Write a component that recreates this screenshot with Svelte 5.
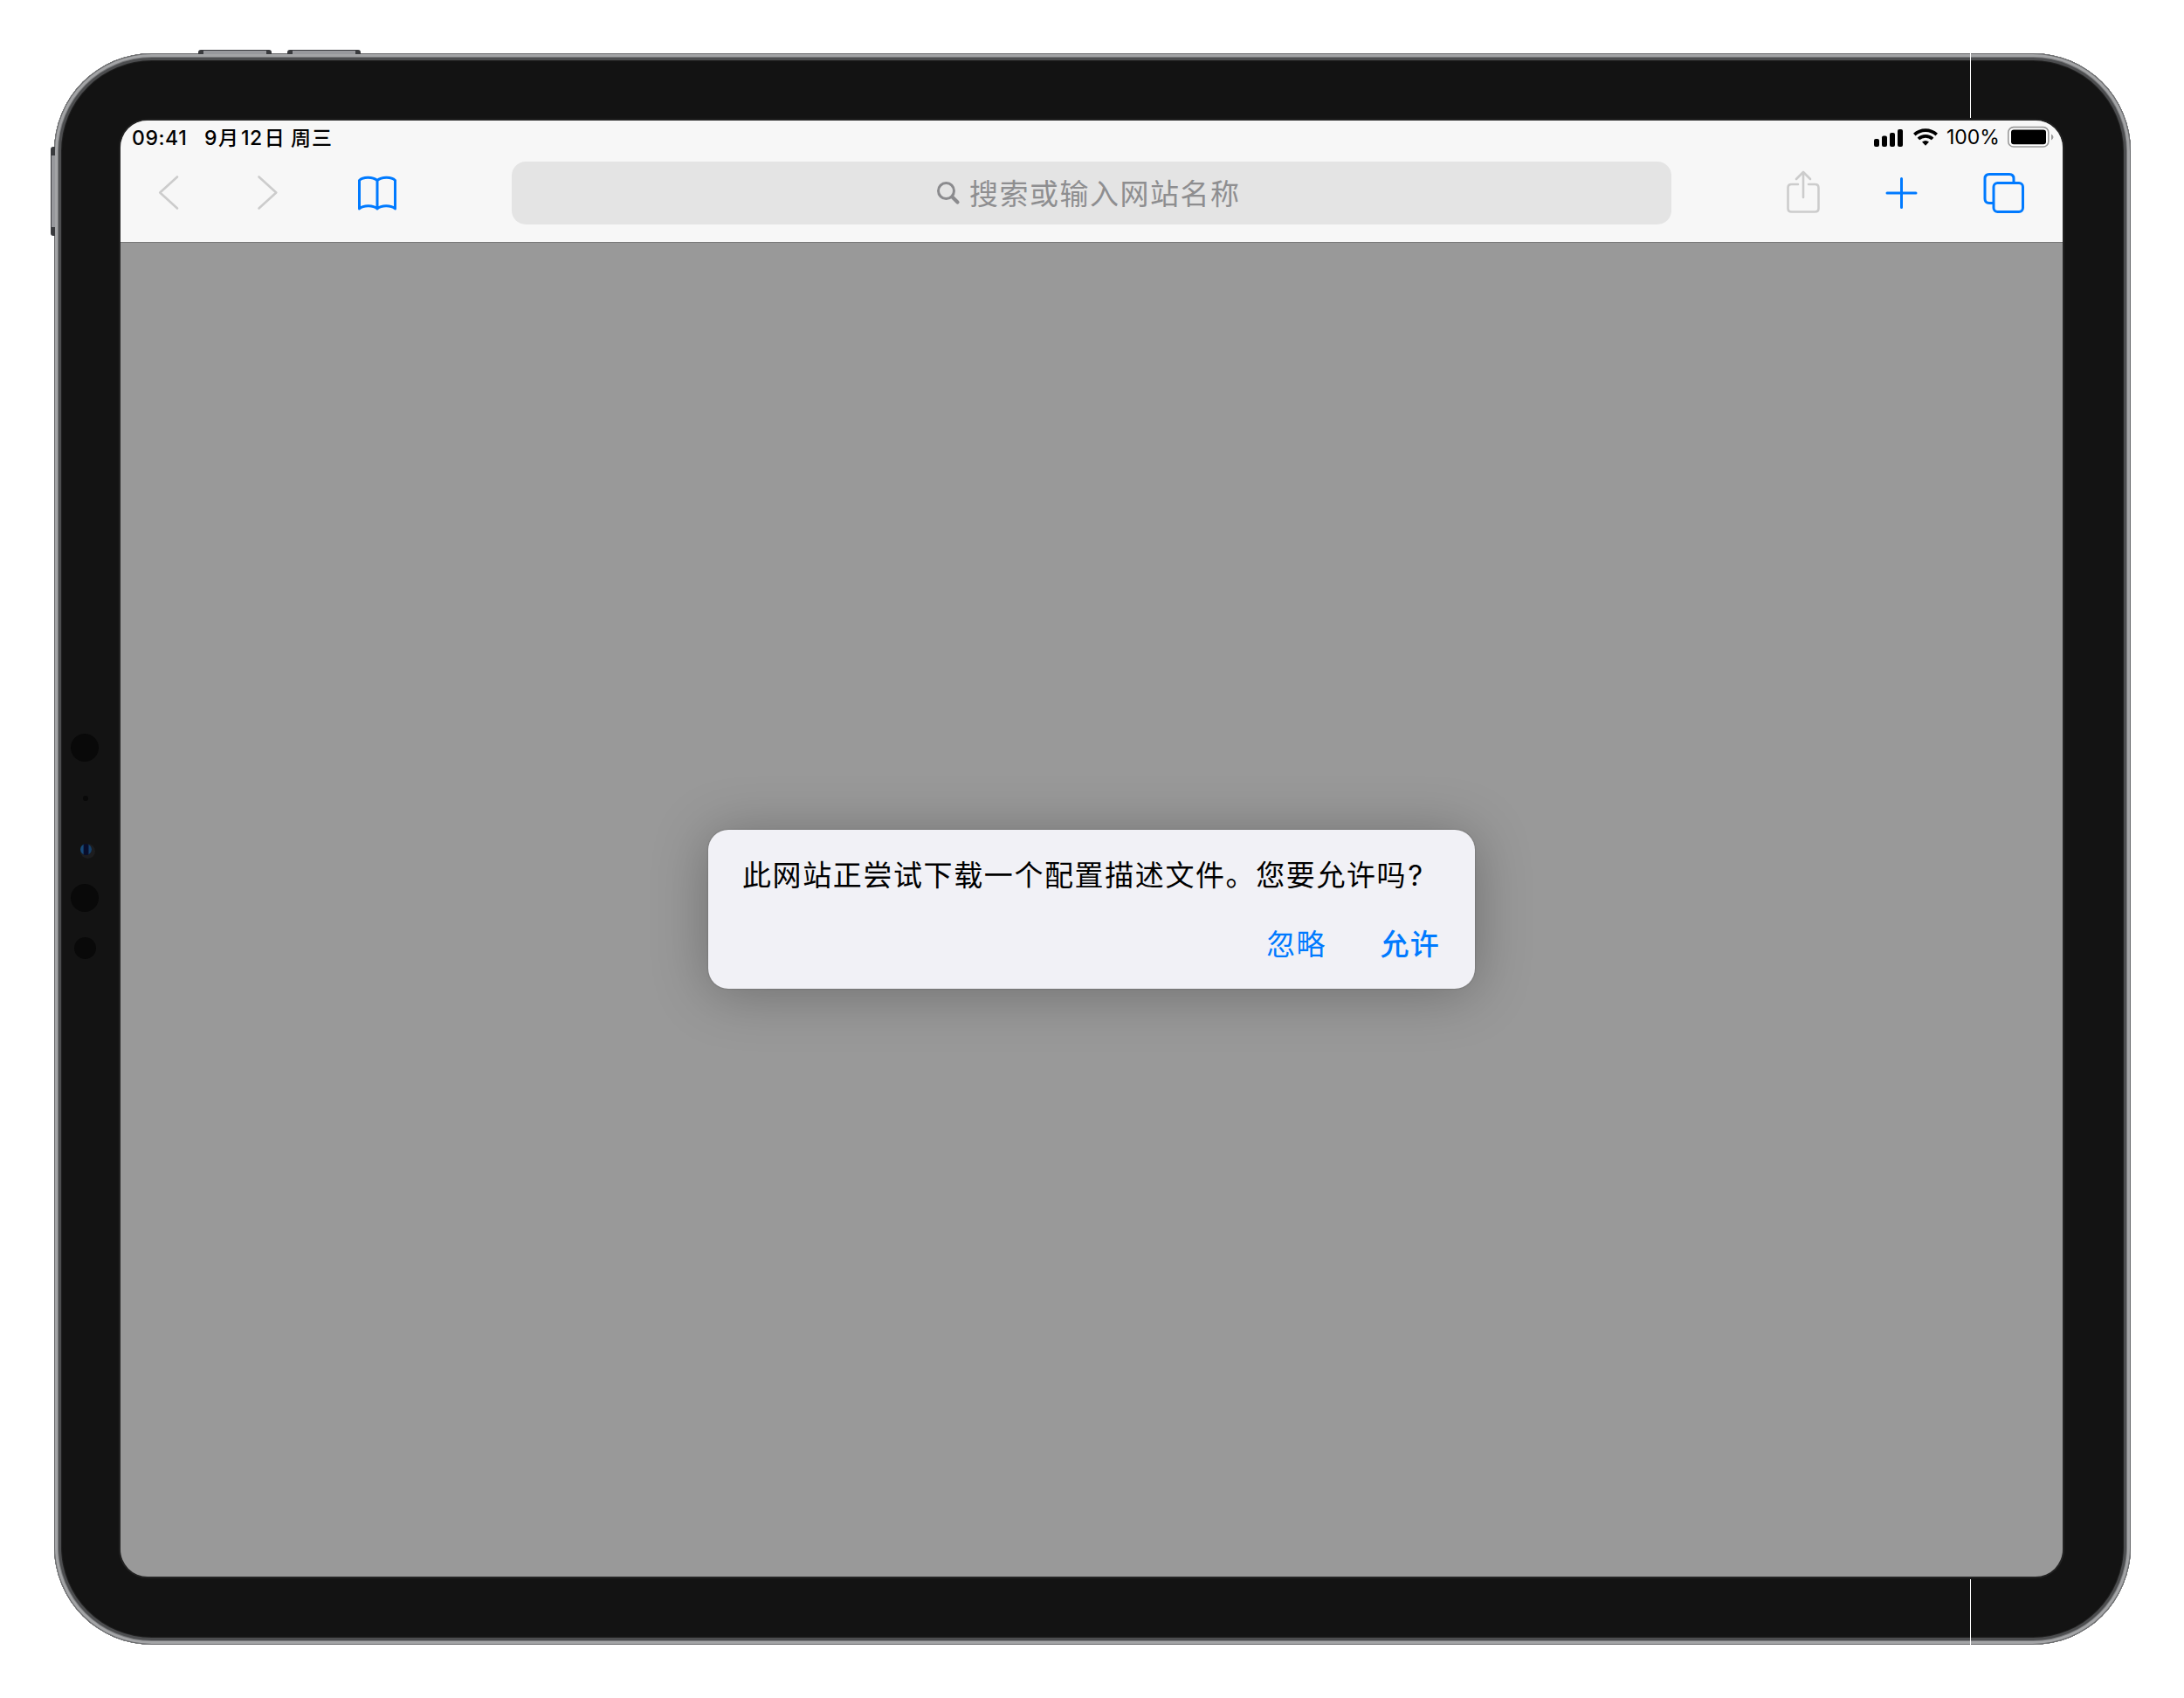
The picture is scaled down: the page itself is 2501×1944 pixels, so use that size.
<script>
  const sensors = ['flood', 'mic', 'camera', 'projector', 'light'];
</script>

<div class="stage">
  <div class="device">
    <i class="key volume-up"></i>
    <i class="key volume-down"></i>
    <i class="key power"></i>
    <i class="seam top"></i>
    <i class="seam bottom"></i>
    {#each sensors as name}<i class="sensor {name}"></i>{/each}

    <div class="screen">
      <header>
        <div class="status">
          <span class="time">09:41</span>
          <span class="date"><b>9</b>月<b class="num">12</b>日</span>
          <span class="weekday">周三</span>
          <svg class="signal" viewBox="2145 145 35 23">
            <rect x="2146" y="158" width="6" height="9" rx="2" />
            <rect x="2155" y="154.6" width="6" height="12.4" rx="2" />
            <rect x="2164" y="151" width="6" height="16" rx="2" />
            <rect x="2173" y="147" width="6" height="20" rx="2" />
          </svg>
          <svg class="wifi" viewBox="2190 145 30 23">
            <g fill="none" stroke="#000" stroke-width="3.7">
              <path d="M2192.3 153.2a18.5 18.5 0 0 1 25.4 0" />
              <path d="M2196.9 158a11.8 11.8 0 0 1 16.2 0" />
            </g>
            <path d="M2201 161.6q4-3.2 8 0l-4 4.1z" />
          </svg>
          <span class="percent">100%</span>
          <svg class="battery" viewBox="2298 144 55 26">
            <rect x="2299.8" y="145.6" width="46" height="22.4" rx="6" fill="#fff" stroke="#999" stroke-width="1.6" />
            <rect x="2303" y="148.6" width="40" height="16.6" rx="3" />
            <path d="M2349 153.5q5 3.5 0 7z" fill="#999" />
          </svg>
        </div>

        <nav class="toolbar">
          <svg class="off back" viewBox="180 189 26 64"><path d="M203 202.5 183.2 220.5 203 238.5" /></svg>
          <svg class="off forward" viewBox="294 189 26 64"><path d="M296.5 202.5 316.3 220.5 296.5 238.5" /></svg>
          <svg class="book" viewBox="408 189 48 64">
            <path d="M432 206.5C427 202.500 416 202 411.500 206.500V239C416 235 427 234.500 432 239C437 234.500 448 235 452.500 239V206.500C448 202 437 202.500 432 206.500V239" />
          </svg>
          <div class="search">
            <svg viewBox="1072 206 28 28">
              <circle cx="1083.500" cy="217.500" r="9" />
              <path d="m1090.500 224.500 6 6" stroke-width="4.200" />
            </svg>
            <span>搜索或输入网站名称</span>
          </div>
          <svg class="off share" viewBox="2044 189 42 64">
            <path d="M2059 211h-7.500q-4 0-4 4v23.500q0 4 4 4h27q4 0 4-4v-23.500q0-4-4-4h-7.500M2065 226v-29M2057 205l8-8 8 8" />
          </svg>
          <svg class="plus" viewBox="2158 189 40 64"><path d="M2161 221h33M2177.500 204.500v33" /></svg>
          <svg class="tabs" viewBox="2269 189 50 64">
            <rect x="2283" y="209.500" width="33.500" height="33" rx="4.500" />
            <path d="M2282 232.500h-4q-5 0-5-5v-23q0-5 5-5h23q5 0 5 5v4" />
          </svg>
        </nav>
      </header>

      <main>
        <section class="dialog">
          <p>此网站正尝试下载一个配置描述文件。您要允许吗<em>?</em></p>
          <div class="actions">
            <button>忽略</button>
            <button class="primary">允许</button>
          </div>
        </section>
      </main>
    </div>
  </div>
</div>

<style>
  :global(body) { background: #fff; }
  .stage {
    box-sizing: border-box;
    width: 2501px;
    height: 1944px;
    padding: 61px 61px 60px 62px;
    font-family: Inter, "Noto Sans CJK SC", sans-serif;
    overflow: hidden;
  }
  .device {
    position: relative;
    box-sizing: border-box;
    width: 2378px;
    height: 1822px;
    padding: 77px 78px 78px 76px;
    border-radius: 112px;
    background: #131313;
    box-shadow:
      inset 0 0 0 1px #68696b,
      inset 0 0 0 4px #a3a4a6,
      inset 0 0 0 5px #77787a,
      inset 0 0 0 8px #4c4d4f,
      inset 0 0 1px 9px #222;
  }
  .screen {
    display: flex;
    flex-direction: column;
    width: 2224px;
    height: 1667px;
    border-radius: 31px;
    overflow: hidden;
    background: #999;
    box-shadow: 0 0 0 2px #222;
  }
  .key { position: absolute; box-sizing: border-box; background: #97989c; border: solid #3a3b3e; }
  .volume-up, .volume-down { top: -4px; width: 84px; height: 5px; border-width: 1px 6px 0; border-radius: 3px 3px 0 0; }
  .volume-up { left: 165px; }
  .volume-down { left: 267px; }
  .power { left: -4px; top: 107px; width: 5px; height: 102px; border-width: 10px 0 10px 1px; border-radius: 3px 0 0 3px; }
  .seam { position: absolute; left: 2194px; width: 1px; background: #fff; }
  .seam.top { top: 0; height: 74px; }
  .seam.bottom { bottom: 0; height: 75px; }
  .sensor { position: absolute; border-radius: 50%; background: #090909; }
  .flood { left: 19px; top: 779px; width: 32px; height: 32px; }
  .mic { left: 33px; top: 850px; width: 6px; height: 6px; }
  .camera {
    left: 30px; top: 905px; width: 13px; height: 13px;
    background: linear-gradient(90deg, #174a7a 0 22%, #080d2b 35% 65%, #15406b 80%);
    box-shadow: 2px 2px 0 2px #1d1d1f;
  }
  .projector { left: 19px; top: 951px; width: 32px; height: 32px; }
  .light { left: 23px; top: 1012px; width: 25px; height: 25px; }

  header { height: 139px; background: #f7f7f7; border-bottom: 1px solid #777; }
  .status {
    display: flex;
    align-items: center;
    height: 40px;
    padding: 0 9px 0 13px;
    font-size: 23px;
    line-height: 40px;
    white-space: nowrap;
  }
  .status svg { flex: none; position: relative; top: -1px; }
  .time { width: 83px; font-weight: 500; letter-spacing: .6px; }
  .date, .weekday { font-weight: 500; }
  .date { width: 99px; }
  .date b { font-weight: 500; letter-spacing: .5px; }
  .num { margin: 0 2px 0 3px; }
  .date b:first-child { margin-right: 1px; }
  .weekday { letter-spacing: 1px; }
  .signal { width: 35px; height: 23px; margin-left: auto; }
  .wifi { width: 30px; height: 23px; margin: 0 9px 0 10px; }
  .percent { width: 69px; line-height: 38px; align-self: flex-start; }
  .battery { width: 55px; height: 26px; }

  .toolbar { display: flex; align-items: center; height: 86px; padding: 0 43px 0 42px; }
  .toolbar > svg { flex: none; height: 64px; }
  .toolbar svg { fill: none; stroke: #007aff; stroke-width: 3; stroke-linecap: round; stroke-linejoin: round; }
  .toolbar .off { stroke: #ccc; stroke-width: 2.6; }
  .back { width: 26px; }
  .forward { width: 26px; margin-left: 88px; }
  .book { width: 48px; margin-left: 88px; }
  .search {
    display: flex;
    align-items: center;
    flex: none;
    box-sizing: border-box;
    width: 1328px;
    height: 72px;
    margin: 0 130px;
    padding-left: 486px;
    border-radius: 16px;
    background: #e4e4e4;
    color: #8e8e90;
    font-family: "Noto Sans CJK SC", sans-serif;
    font-size: 33px;
    font-weight: 400;
    letter-spacing: 1.5px;
    white-space: nowrap;
  }
  .search span { padding-bottom: 3px; }
  .search svg { width: 28px; height: 28px; margin-right: 10px; stroke: #8b8b8e; }
  .share { width: 42px; }
  .plus { width: 40px; margin-left: 72px; }
  .tabs { width: 50px; margin-left: 71px; }

  main { flex: 1; display: flex; justify-content: center; align-items: flex-start; padding-top: 672px; }
  .dialog {
    box-sizing: border-box;
    width: 878px;
    height: 182px;
    padding: 26px 40px 0 39px;
    border-radius: 23px;
    background: #f1f1f6;
    box-shadow: 0 5px 64px rgba(0, 0, 0, .28), 0 0 2px rgba(0, 0, 0, .3);
    font-family: "Noto Sans CJK SC", sans-serif;
    font-size: 33px;
    font-weight: 400;
    letter-spacing: 1.6px;
  }
  p { margin: 0; line-height: 48px; color: #000; white-space: nowrap; }
  em { margin-left: 1px; font-family: Inter, sans-serif; font-style: normal; }
  .actions { display: flex; justify-content: flex-end; gap: 62px; margin-top: 30px; }
  button { padding: 0; border: 0; background: none; color: #007aff; font: inherit; line-height: 46px; letter-spacing: 1.2px; }
  .primary { font-weight: 500; }
</style>
